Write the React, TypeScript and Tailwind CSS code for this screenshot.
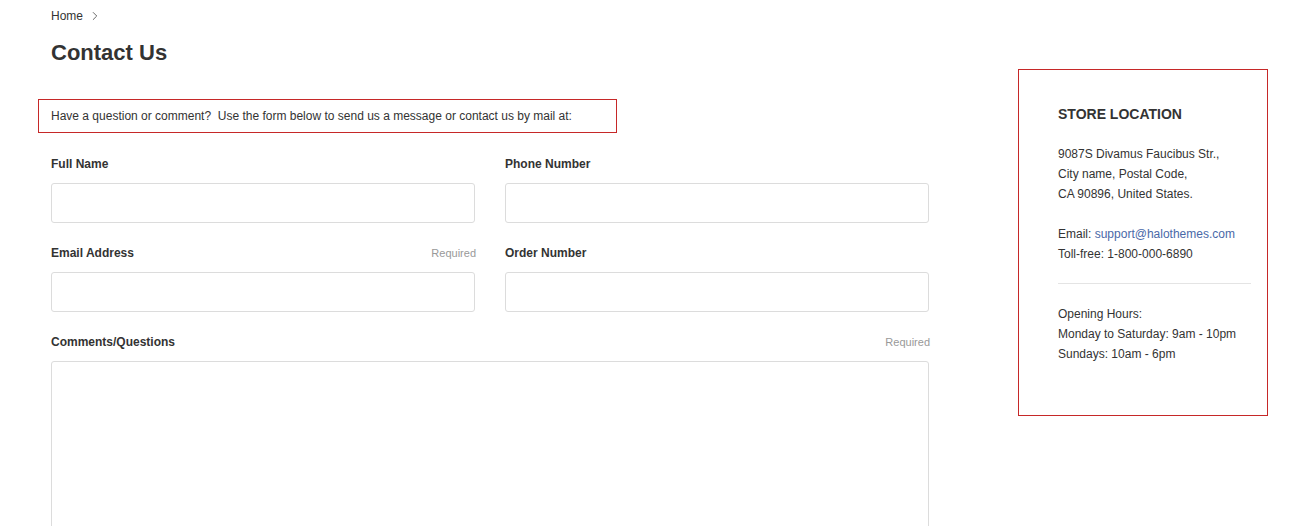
import { ChevronRight } from 'lucide-react'

const font = { fontFamily: '"Liberation Sans", Arial, sans-serif' }

function Field({ label, required }: { label: string; required?: boolean }) {
  return (
    <div className="flex flex-col">
      <div className="flex items-center justify-between h-5 mb-[9px]">
        <label className="text-xs font-bold text-[#333]">{label}</label>
        {required && <span className="text-[11px] text-[#999] -mr-px">Required</span>}
      </div>
      <input className="h-10 w-full border border-[#dcdcdc] rounded-[3px] bg-white px-3 text-xs outline-none" />
    </div>
  )
}

export default function App() {
  return (
    <div className="min-h-screen bg-white text-[#333]" style={font}>
      <div className="flex pl-[51px]">
        <div className="w-[878px] shrink-0">
          <nav className="pt-[6px] flex items-center h-[26px] text-xs leading-5">
            <span>Home</span>
            <ChevronRight className="w-[14px] h-[14px] ml-[5px] text-[#555]" strokeWidth={1.5} />
          </nav>
          <h1 className="mt-[12px] text-[22px] leading-[30px] font-bold text-[#333]">Contact Us</h1>

          <div className="mt-[31px] -ml-[13px] w-[579px] border border-[#c62828] pl-3 py-[6px] text-xs leading-5">
            Have a question or comment?&nbsp; Use the form below to send us a message or contact us by mail at:
          </div>

          <div className="mt-[21px] grid grid-cols-2 gap-x-[30px] gap-y-5">
            <Field label="Full Name" />
            <Field label="Phone Number" />
            <Field label="Email Address" required />
            <Field label="Order Number" />
          </div>

          <div className="mt-5 flex flex-col">
            <div className="flex items-center justify-between h-5 mb-[9px]">
              <label className="text-xs font-bold text-[#333]">Comments/Questions</label>
              <span className="text-[11px] text-[#999] -mr-px">Required</span>
            </div>
            <textarea className="h-[200px] w-full border border-[#dcdcdc] rounded-[3px] resize-none outline-none" />
          </div>
        </div>

        <aside className="ml-[89px] mt-[69px] w-[250px] self-start border border-[#c62828] pl-[39px] pr-4 pt-[34px] pb-[51px] text-xs leading-5">
          <h2 className="text-sm font-bold leading-5 text-[#333]">STORE LOCATION</h2>
          <p className="mt-5">
            9087S Divamus Faucibus Str.,
            <br />
            City name, Postal Code,
            <br />
            CA 90896, United States.
          </p>
          <p className="mt-5">
            Email: <a className="text-[#4a69a8]">support@halothemes.com</a>
            <br />
            Toll-free: 1-800-000-6890
          </p>
          <div className="mt-[19px] border-t border-[#e4e4e4]" />
          <p className="mt-5">
            Opening Hours:
            <br />
            Monday to Saturday: 9am - 10pm
            <br />
            Sundays: 10am - 6pm
          </p>
        </aside>
      </div>
    </div>
  )
}
